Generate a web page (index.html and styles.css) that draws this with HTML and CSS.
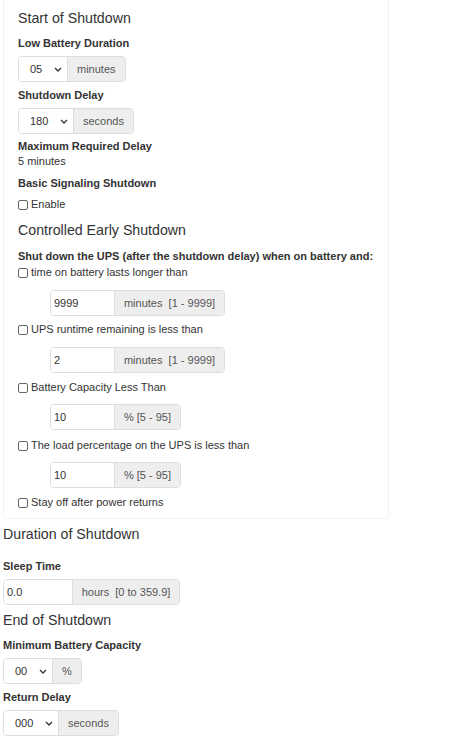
FILE: index.html
```html
<!DOCTYPE html>
<html>
<head>
<meta charset="utf-8">
<link rel="stylesheet" href="styles.css">
</head>
<body>
<div class="panel">
  <h4 class="heading">Start of Shutdown</h4>
  <div class="label mt8">Low Battery Duration</div>
  <div class="group mt5">
    <div class="sel w49"><span>05</span><svg class="chev" viewBox="0 0 8 5"><path d="M1 1l3 3 3-3" fill="none" stroke="#333" stroke-width="1.3"/></svg></div>
    <div class="addon">minutes</div>
  </div>
  <div class="label mt6">Shutdown Delay</div>
  <div class="group mt5">
    <div class="sel w55"><span>180</span><svg class="chev" viewBox="0 0 8 5"><path d="M1 1l3 3 3-3" fill="none" stroke="#333" stroke-width="1.3"/></svg></div>
    <div class="addon">seconds</div>
  </div>
  <div class="label mt5">Maximum Required Delay</div>
  <div class="text">5 minutes</div>
  <div class="label mt7">Basic Signaling Shutdown</div>
  <label class="check mt6"><input type="checkbox"><span>Enable</span></label>
  <h4 class="heading mt8">Controlled Early Shutdown</h4>
  <div class="label mt9">Shut down the UPS (after the shutdown delay) when on battery and:</div>
  <label class="check mt1"><input type="checkbox"><span>time on battery lasts longer than</span></label>
  <div class="group indent mt10">
    <div class="inp w64">9999</div>
    <div class="addon w111">minutes&nbsp; [1 - 9999]</div>
  </div>
  <label class="check mt6"><input type="checkbox"><span>UPS runtime remaining is less than</span></label>
  <div class="group indent mt10">
    <div class="inp w64">2</div>
    <div class="addon w111">minutes&nbsp; [1 - 9999]</div>
  </div>
  <label class="check mt7"><input type="checkbox"><span>Battery Capacity Less Than</span></label>
  <div class="group indent mt9">
    <div class="inp w64">10</div>
    <div class="addon w67">% [5 - 95]</div>
  </div>
  <label class="check mt8"><input type="checkbox"><span>The load percentage on the UPS is less than</span></label>
  <div class="group indent mt9">
    <div class="inp w64">10</div>
    <div class="addon w67">% [5 - 95]</div>
  </div>
  <label class="check mt7"><input type="checkbox"><span>Stay off after power returns</span></label>
</div>

<section class="plain">
  <h4 class="heading mt5">Duration of Shutdown</h4>
  <div class="label mt15">Sleep Time</div>
  <div class="group mt5">
    <div class="inp w69">0.0</div>
    <div class="addon w108">hours&nbsp; [0 to 359.9]</div>
  </div>
  <h4 class="heading mt5">End of Shutdown</h4>
  <div class="label mt8">Minimum Battery Capacity</div>
  <div class="group mt5">
    <div class="sel w49"><span>00</span><svg class="chev" viewBox="0 0 8 5"><path d="M1 1l3 3 3-3" fill="none" stroke="#333" stroke-width="1.3"/></svg></div>
    <div class="addon">%</div>
  </div>
  <div class="label mt6">Return Delay</div>
  <div class="group mt5">
    <div class="sel w55"><span>000</span><svg class="chev" viewBox="0 0 8 5"><path d="M1 1l3 3 3-3" fill="none" stroke="#333" stroke-width="1.3"/></svg></div>
    <div class="addon">seconds</div>
  </div>
</section>
</body>
</html>
```

FILE: styles.css
```css
* { box-sizing: border-box; }
html, body { margin: 0; padding: 0; background: #fff; }
body {
  font-family: "Liberation Sans", Arial, sans-serif;
  font-size: 11px;
  color: #333;
  padding-left: 3px;
}
.panel {
  width: 386px;
  border: 1px solid #f2f2f2;
  border-top: none;
  border-radius: 0 0 4px 4px;
  padding: 8px 14px 8px 14px;
  display: flex;
  flex-direction: column;
  align-items: flex-start;
}
.plain {
  display: flex;
  flex-direction: column;
  align-items: flex-start;
}
.heading {
  margin: 0;
  font-size: 14.2px;
  font-weight: normal;
  line-height: 20px;
  color: #333;
}
.label {
  font-weight: bold;
  line-height: 15px;
}
.text { line-height: 15px; }
.check {
  display: flex;
  align-items: center;
  line-height: 15px;
}
.check input {
  appearance: none;
  -webkit-appearance: none;
  width: 10px;
  height: 10px;
  margin: 0 3px 0 0;
  border: 1px solid #666;
  border-radius: 2px;
  background: #fff;
}
.group {
  display: flex;
  height: 26px;
  border: 1px solid #ddd;
  border-radius: 4px;
  overflow: hidden;
}
.indent { margin-left: 32px; }
.sel {
  display: flex;
  align-items: center;
  justify-content: space-between;
  padding: 0 5px 0 11px;
  background: #fff;
  border-right: 1px solid #ddd;
  color: #333;
}
.chev { width: 8px; height: 5px; }
.inp {
  display: flex;
  align-items: center;
  padding-left: 3px;
  background: #fff;
  border-right: 1px solid #ddd;
  color: #333;
}
.addon {
  display: flex;
  align-items: center;
  justify-content: center;
  padding: 0 9px;
  background: #eee;
  color: #555;
  white-space: pre;
}
.w49 { width: 49px; }
.w55 { width: 55px; }
.w64 { width: 64px; }
.w69 { width: 69px; }
.w111 { width: 109px; }
.w108 { width: 106px; }
.w67 { width: 65px; }
.mt1 { margin-top: 1px; }
.mt5 { margin-top: 5px; }
.mt6 { margin-top: 6px; }
.mt7 { margin-top: 7px; }
.mt8 { margin-top: 8px; }
.mt9 { margin-top: 9px; }
.mt10 { margin-top: 10px; }
.mt15 { margin-top: 15px; }
```
